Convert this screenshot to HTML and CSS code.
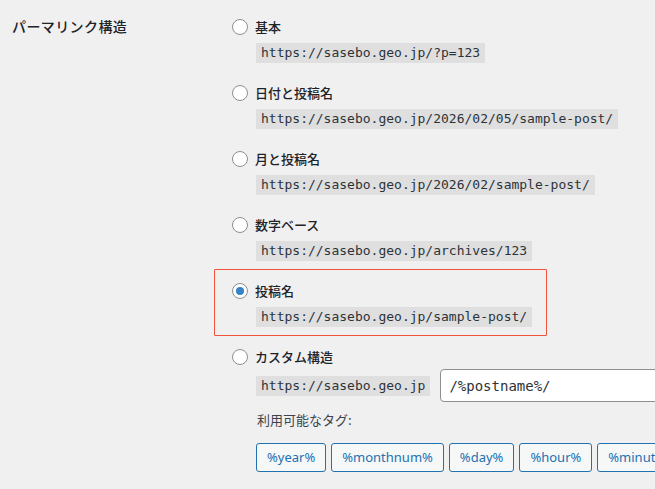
FILE: index.html
```html
<!DOCTYPE html>
<html lang="ja">
<head>
<meta charset="utf-8">
<title>パーマリンク構造</title>
<link rel="stylesheet" href="styles.css">
</head>
<body>
<div class="form-row">
  <div class="row-label">パーマリンク構造</div>
  <div class="options">
    <div class="option">
      <label class="radio-line"><input type="radio" name="pl"> 基本</label>
      <code class="sample">https://sasebo.geo.jp/?p=123</code>
    </div>
    <div class="option">
      <label class="radio-line"><input type="radio" name="pl"> 日付と投稿名</label>
      <code class="sample">https://sasebo.geo.jp/2026/02/05/sample-post/</code>
    </div>
    <div class="option">
      <label class="radio-line"><input type="radio" name="pl"> 月と投稿名</label>
      <code class="sample">https://sasebo.geo.jp/2026/02/sample-post/</code>
    </div>
    <div class="option">
      <label class="radio-line"><input type="radio" name="pl"> 数字ベース</label>
      <code class="sample">https://sasebo.geo.jp/archives/123</code>
    </div>
    <div class="option highlighted">
      <label class="radio-line"><input type="radio" name="pl" checked> 投稿名</label>
      <code class="sample">https://sasebo.geo.jp/sample-post/</code>
    </div>
    <div class="option custom">
      <label class="radio-line"><input type="radio" name="pl"> カスタム構造</label>
      <div class="custom-row">
        <code class="sample">https://sasebo.geo.jp</code>
        <input class="structure" type="text" value="/%postname%/">
      </div>
      <div class="tags-label">利用可能なタグ:</div>
      <div class="tags">
        <button class="tag">%year%</button>
        <button class="tag">%monthnum%</button>
        <button class="tag">%day%</button>
        <button class="tag">%hour%</button>
        <button class="tag">%minute%</button>
        <button class="tag">%second%</button>
        <button class="tag">%post_id%</button>
      </div>
    </div>
  </div>
</div>
</body>
</html>
```
FILE: styles.css
```css
html, body {
  margin: 0;
  padding: 0;
  background: #f0f0f1;
  overflow: hidden;
  width: 655px;
  height: 489px;
}

body {
  font-family: "Noto Sans CJK JP", "Noto Sans", sans-serif;
  color: #1d2327;
  font-size: 13px;
}

.form-row {
  display: grid;
  grid-template-columns: 220px 1fr;
  padding: 16px 0 0 12px;
}

.row-label {
  font-size: 14px;
  line-height: 21px;
  font-weight: 500;
  color: #1d2327;
  letter-spacing: 0.4px;
}

.options {
  display: flex;
  flex-direction: column;
  gap: 19px;
  min-width: 0;
}

.option {
  display: flex;
  flex-direction: column;
  align-items: flex-start;
  width: fit-content;
  position: relative;
}

.radio-line {
  display: flex;
  align-items: center;
  height: 21px;
  font-size: 13px;
  font-weight: 500;
  color: #1d2327;
  gap: 7px;
}

.radio-line input {
  appearance: none;
  -webkit-appearance: none;
  margin: 0;
  width: 16px;
  height: 16px;
  border: 1px solid #8c8f94;
  border-radius: 50%;
  background: #fff;
  box-sizing: border-box;
  display: grid;
  place-items: center;
  flex: none;
}

.radio-line input:checked::before {
  content: "";
  width: 8px;
  height: 8px;
  border-radius: 50%;
  background: #3582c4;
}

.sample {
  font-family: "DejaVu Sans Mono", "Liberation Mono", monospace;
  font-size: 13px;
  line-height: 20px;
  padding: 0 5px;
  background: rgba(0, 0, 0, 0.07);
  color: #2c3338;
  margin: 6px 0 0 24px;
  white-space: nowrap;
}

.highlighted::after {
  content: "";
  position: absolute;
  top: -11px;
  bottom: -9px;
  left: -18px;
  right: -15px;
  border: 1.5px solid #f4513c;
  border-radius: 1px;
  pointer-events: none;
}

.custom {
  width: auto;
  align-items: stretch;
}

.custom-row {
  display: flex;
  align-items: center;
  gap: 10px;
  margin: 2px 0 0 24px;
}

.custom-row .sample {
  margin: 0;
}

.structure {
  flex: none;
  width: 300px;
  height: 33px;
  box-sizing: border-box;
  border: 1px solid #8c8f94;
  border-radius: 4px;
  background: #fff;
  padding: 0 8px;
  font-family: "DejaVu Sans Mono", "Liberation Mono", monospace;
  font-size: 14px;
  color: #2c3338;
  outline: none;
}

.tags-label {
  margin: 8px 0 0 25px;
  line-height: 20px;
  font-size: 13px;
  color: #3c434a;
}

.tags {
  display: flex;
  gap: 5px;
  margin: 13px 0 0 24px;
  white-space: nowrap;
}

.tag {
  flex: none;
  height: 29px;
  padding: 0 10px;
  border: 1px solid #2271b1;
  border-radius: 3px;
  background: #f6f7f7;
  color: #2271b1;
  font-family: "Noto Sans", sans-serif;
  font-size: 13px;
  line-height: 27px;
}
```
